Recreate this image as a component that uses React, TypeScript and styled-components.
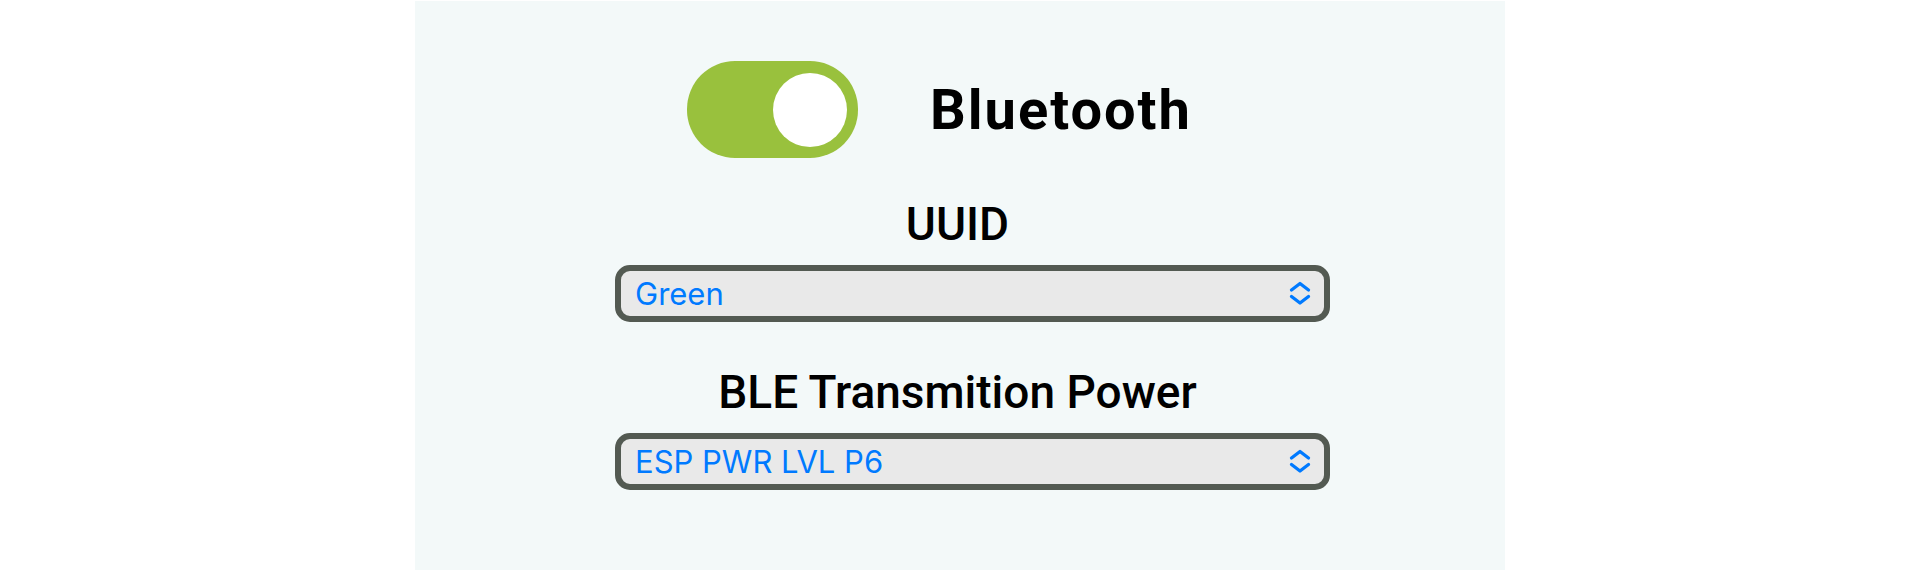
import React, { useId, useState } from "react";
import styled, { createGlobalStyle } from "styled-components";

const GlobalStyle = createGlobalStyle`
  *, *::before, *::after { box-sizing: border-box; }
  body {
    margin: 0;
    background: #ffffff;
    color: #000000;
    font-family: Roboto, "Liberation Sans", sans-serif;
  }
`;

const Panel = styled.main`
  width: 100%;
  max-width: 1090px;
  margin: 1px auto 0;
  padding: 60px 175px 80px 200px;
  background: #f3f9f9;
`;

const ToggleRow = styled.label`
  display: flex;
  align-items: center;
  gap: 72px;
  margin-bottom: 36px;
  padding-left: 72px;
  cursor: pointer;
`;

const Switch = styled.input`
  appearance: none;
  display: flex;
  align-items: center;
  flex: none;
  width: 171px;
  height: 97px;
  margin: 0;
  padding: 0 11px;
  border-radius: 48px;
  background: #cccccc;
  cursor: pointer;

  &::before {
    content: "";
    width: 74px;
    height: 74px;
    border-radius: 50%;
    background: #ffffff;
  }

  &:checked {
    justify-content: flex-end;
    background: #99c13d;
  }
`;

const ToggleText = styled.span`
  font-size: 56px;
  font-weight: 700;
  line-height: 64px;
  letter-spacing: 2px;
`;

const Fields = styled.div`
  display: flex;
  flex-direction: column;
  gap: 40px;
`;

const Field = styled.div`
  display: flex;
  flex-direction: column;
`;

const FieldLabel = styled.label`
  padding-right: 30px;
  font-size: 46px;
  font-weight: 500;
  line-height: 60px;
  text-align: center;
`;

const SelectBox = styled.div`
  position: relative;
  margin-top: 11px;
`;

const Select = styled.select`
  appearance: none;
  display: block;
  width: 100%;
  height: 57px;
  padding: 0 48px 0 14px;
  border: 6px solid #535a52;
  border-radius: 15px;
  background: #e9e9e9;
  color: #007aff;
  font-family: Inter, "Liberation Sans", sans-serif;
  font-size: 31px;
  line-height: 40px;
`;

const Chevrons = styled.svg`
  position: absolute;
  top: 16px;
  right: 19px;
  pointer-events: none;
`;

type SelectFieldProps = { label: string; options: string[] };

function SelectField({ label, options }: SelectFieldProps) {
  const id = useId();
  return (
    <Field>
      <FieldLabel htmlFor={id}>{label}</FieldLabel>
      <SelectBox>
        <Select id={id}>
          {options.map((option) => (
            <option key={option}>{option}</option>
          ))}
        </Select>
        <Chevrons
          width="22"
          height="25"
          viewBox="0 0 22 25"
          fill="none"
          stroke="#007aff"
          strokeWidth="3.3"
          strokeLinecap="round"
          strokeLinejoin="round"
          aria-hidden="true"
        >
          <path d="M2.5 9 11 2.5 19.5 9M2.5 15.5 11 22 19.5 15.5" />
        </Chevrons>
      </SelectBox>
    </Field>
  );
}

export default function App() {
  const [enabled, setEnabled] = useState(true);
  return (
    <>
      <GlobalStyle />
      <Panel>
        <ToggleRow>
          <Switch
            type="checkbox"
            role="switch"
            checked={enabled}
            onChange={(event) => setEnabled(event.target.checked)}
          />
          <ToggleText>Bluetooth</ToggleText>
        </ToggleRow>
        <Fields>
          <SelectField label="UUID" options={["Green"]} />
          <SelectField label="BLE Transmition Power" options={["ESP PWR LVL P6"]} />
        </Fields>
      </Panel>
    </>
  );
}
